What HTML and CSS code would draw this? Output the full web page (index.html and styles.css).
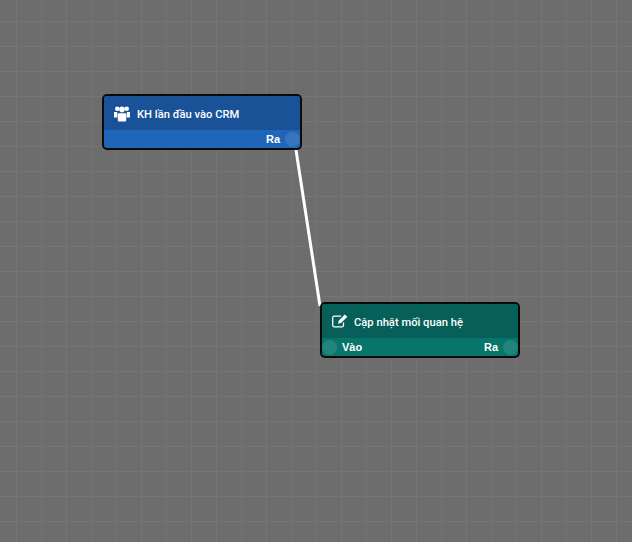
FILE: index.html
```html
<!DOCTYPE html>
<html lang="vi">
<head>
<meta charset="utf-8">
<title>Flow</title>
<link rel="stylesheet" href="styles.css">
</head>
<body>
<main class="canvas">
  <svg class="wires" width="632" height="542" viewBox="0 0 632 542">
    <line x1="296" y1="150" x2="320" y2="306" class="wire"/>
  </svg>
  <section class="node node-blue">
    <header class="node-head">
      <svg class="node-icon" width="16" height="16" viewBox="0 0 16 16">
        <circle cx="3.300" cy="2.800" r="2.300"/>
        <circle cx="12.700" cy="2.800" r="2.300"/>
        <circle cx="8" cy="3.400" r="2.800"/>
        <path d="M0 6h3.200l.2 5.500H0z"/>
        <path d="M12.800 6H16v5.500h-3.400z"/>
        <path d="M4.800 7.200h6.400a1 1 0 0 1 1 1V14.500a1 1 0 0 1-1 1H4.800a1 1 0 0 1-1-1V8.200a1 1 0 0 1 1-1z"/>
      </svg>
      <span class="node-title">KH lần đầu vào CRM</span>
    </header>
    <footer class="node-ports">
      <span class="port-label port-out-label">Ra</span>
      <i class="port"></i>
    </footer>
  </section>
  <section class="node node-teal">
    <header class="node-head">
      <svg class="node-icon" width="16" height="14" viewBox="0 0 16 14">
        <path class="stroke" d="M11.500 8.500v2.800a1.500 1.500 0 0 1-1.500 1.500H2.200a1.500 1.500 0 0 1-1.500-1.500V3.700a1.500 1.500 0 0 1 1.500-1.500H9"/>
        <path d="M12.800.4l2.600 2.400-6.400 6.300-3 .7.700-3z"/>
      </svg>
      <span class="node-title">Cập nhật mối quan hệ</span>
    </header>
    <footer class="node-ports">
      <i class="port"></i>
      <span class="port-label">Vào</span>
      <span class="port-label port-out-label">Ra</span>
      <i class="port"></i>
    </footer>
  </section>
</main>
</body>
</html>
```
FILE: styles.css
```css
* { box-sizing: border-box; }
html, body { margin: 0; height: 100%; }
.canvas {
  position: relative;
  width: 632px;
  height: 542px;
  overflow: hidden;
  background-color: #6d6d6d;
  background-image:
    linear-gradient(to right, #757575 1px, transparent 1px),
    linear-gradient(to bottom, #757575 1px, transparent 1px),
    conic-gradient(#6a6a6a 25%, #707070 0 50%, #6a6a6a 0 75%, #707070 0);
  background-size: 25px 25px, 25px 25px, 2px 2px;
  background-position: 16px 21px, 16px 21px, 0 0;
  font-family: "Liberation Sans", Arial, sans-serif;
}
.wires { position: absolute; left: 0; top: 0; }
.wire { stroke: #fff; stroke-width: 3; }
.node {
  position: absolute;
  width: 200px;
  height: 56px;
  border: 2px solid #0a0a0a;
  border-radius: 5px;
  overflow: hidden;
  color: #fff;
  display: flex;
  flex-direction: column;
}
.node-blue { left: 102px; top: 94px; background: #1f65b8; }
.node-blue .node-head { background: #195297; }
.node-teal { left: 320px; top: 302px; background: #08756b; }
.node-teal .node-head { background: #065f58; }
.node-head {
  height: 34px;
  display: flex;
  align-items: center;
  padding-left: 10px;
  padding-top: 1px;
  font-family: Roboto, "Liberation Sans", sans-serif;
  font-size: 11.200px;
  font-weight: 500;
}
.node-title { padding-top: 2px; }
.node-icon { fill: #fff; margin-right: 7px; flex: none; }
.node-teal .node-icon { margin-top: -2px; margin-right: 6px; }
.node-icon .stroke { fill: none; stroke: #fff; stroke-width: 1.300; }
.node-ports {
  flex: 1;
  display: flex;
  align-items: center;
  font-size: 11px;
  font-weight: 700;
}
.port {
  width: 15px;
  height: 15px;
  border-radius: 50%;
  background: rgba(255, 255, 255, 0.11);
  flex: none;
}
.port-label { margin: 0 5px; }
.port-out-label { margin-left: auto; }
```
